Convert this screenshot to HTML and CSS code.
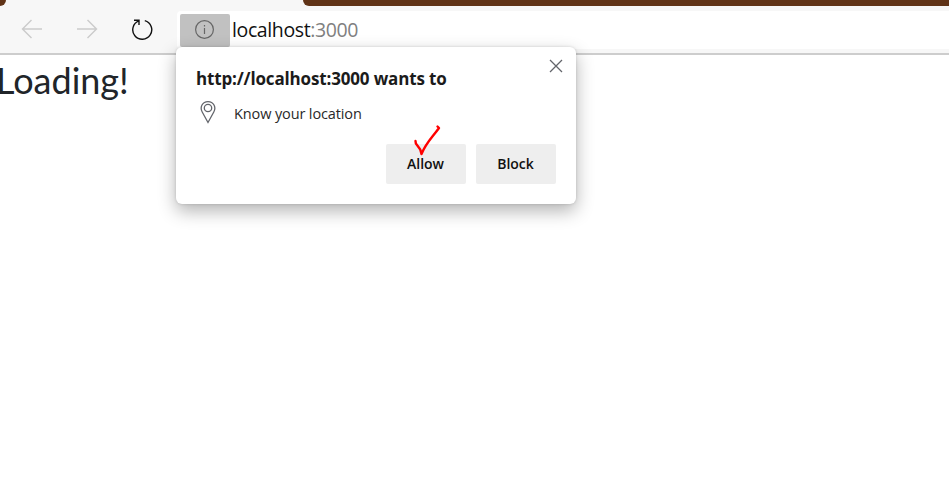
FILE: index.html
```html
<!DOCTYPE html>
<html lang="en">
<head>
<meta charset="utf-8">
<title>localhost:3000</title>
<link rel="stylesheet" href="styles.css">
</head>
<body>
<header class="chrome">
  <div class="tabs"><div class="tab-left"></div><div class="tab-right"></div></div>
  <div class="toolbar">
    <nav class="nav">
      <svg class="arrow" width="22" height="22" viewBox="0 0 22 22"><path d="M21 11H1.500M10.500 2L1.500 11l9 9"/></svg>
      <svg class="arrow" width="22" height="22" viewBox="0 0 22 22"><path d="M1 11h19.500M11.500 2l9 9-9 9"/></svg>
      <svg class="reload" width="22" height="22" viewBox="0 0 22 22"><path d="M13.800 2.600A9.500 9.500 0 1 1 7.800 2.900M3 2.200H8V7"/></svg>
    </nav>
    <div class="address">
      <div class="info"><svg width="20" height="20" viewBox="0 0 20 20"><circle cx="10.500" cy="9.500" r="8.900"/><path d="M10.500 8v6M10.500 5v1.500"/></svg></div>
      <div class="url">localhost<span>:3000</span></div>
    </div>
  </div>
</header>
<main><h1>Loading!</h1></main>
<section class="popup">
  <h2>http://localhost:3000 wants to</h2>
  <div class="permission">
    <svg width="16" height="24" viewBox="0 0 16 24"><path d="M8 22.500L2.200 12C-.4 7.300 2.300 1.600 8 1.600S16.400 7.300 13.800 12Z"/><circle cx="8" cy="8" r="3.700"/></svg>
    <span>Know your location</span>
  </div>
  <div class="actions"><button>Allow</button><button>Block</button></div>
  <svg class="close" width="14" height="14" viewBox="0 0 14 14"><path d="M1 1l12 12M13 1L1 13"/></svg>
  <svg class="check" width="28" height="32" viewBox="0 0 28 32"><path d="M2.500 17C2 22.500 7 20.500 8.500 30C13 19 18 15 26 4L24.500 2.500"/></svg>
</section>
</body>
</html>
```
FILE: styles.css
```css
* { box-sizing: border-box; }
body { margin: 0; height: 503px; overflow: hidden; background: #fff; font-family: "Open Sans", "Noto Sans", sans-serif; }
svg { display: block; fill: none; }
.chrome { height: 55px; background: #f7f7f7; border-bottom: 2px solid #cdcdcd; }
.tabs { height: 6px; display: flex; justify-content: space-between; }
.tab-left { width: 6px; background: #603317; border-bottom-right-radius: 6px; }
.tab-right { width: 646px; background: #603317; border-bottom-left-radius: 6px; }
.toolbar { display: flex; height: 47px; padding-top: 5px; }
.nav { display: flex; gap: 33px; width: 177px; padding: 7px 0 0 21px; }
.arrow { stroke: #cbcbcb; stroke-width: 1.400; }
.reload { stroke: #111; stroke-width: 1.400; }
.address { display: flex; flex: 1; height: 38px; padding: 3px 0 0 3px; background: #fff; border-radius: 4px 0 0 4px; }
.info { display: flex; width: 50px; height: 33px; padding: 6px 0 0 14px; background: #c1c1c1; border-radius: 2px; }
.info svg { stroke: #666; stroke-width: 1.200; }
.url { margin-left: 2px; font-size: 19.500px; font-weight: 400; line-height: 31px; letter-spacing: -.38px; color: #111; white-space: nowrap; }
.url span { color: #808080; }
h1 { margin: 3px 0 0 -4px; font: 400 36px/44px Lato, sans-serif; color: #212529; }
.popup { position: absolute; left: 176px; top: 47px; width: 400px; height: 157px; padding: 20px; background: #fff; border-radius: 6px; box-shadow: 0 7px 18px rgba(0,0,0,.3), 0 0 3px rgba(0,0,0,.15); }
h2 { margin: 0; font-size: 17px; line-height: 24px; font-weight: 700; letter-spacing: -.16px; color: #1b1b1b; white-space: nowrap; }
.permission { display: flex; height: 25px; margin-top: 8px; padding-left: 4px; gap: 18px; }
.permission svg { margin-top: 1px; stroke: #63656b; stroke-width: 1.300; }
.permission span { font-size: 14.500px; font-weight: 380; line-height: 30px; letter-spacing: -.12px; color: #292929; white-space: nowrap; }
.actions { display: flex; justify-content: flex-end; gap: 10px; margin-top: 20px; }
button { width: 80px; height: 40px; padding: 0 1px 1px 0; border: 0; border-radius: 2px; background: #eee; font: 550 14px "Open Sans", sans-serif; color: #111; }
.close { position: absolute; left: 373px; top: 12px; stroke: #63656b; stroke-width: 1.300; }
.check { position: absolute; left: 237px; top: 77px; stroke: #f00; stroke-width: 2.400; stroke-linecap: round; stroke-linejoin: round; }
```
